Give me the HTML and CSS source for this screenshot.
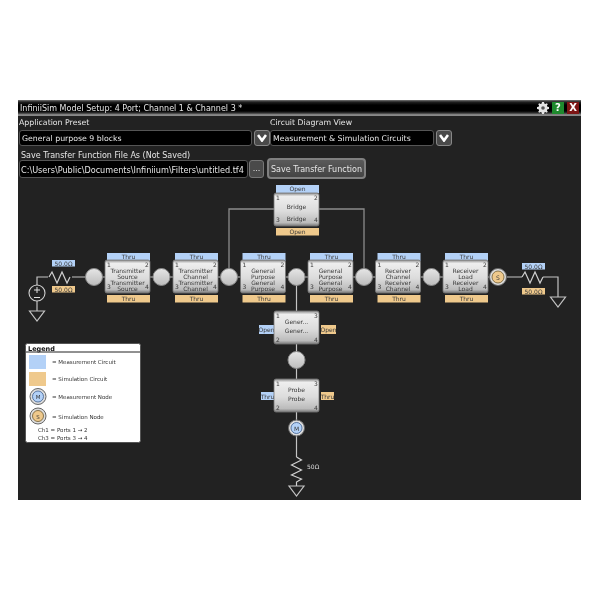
FILE: index.html
```html
<!DOCTYPE html>
<html>

<head>
    <title>InfiniiSim Model Setup</title>
    <link rel="stylesheet" href="styles.css">
</head>

<body>
    <div class="window">
        <div class="titlebar">
            <span class="title">InfiniiSim Model Setup: 4 Port; Channel 1 &amp; Channel 3 *</span>
            <svg class="gear" viewBox="0 0 12 12">
                <path fill="#e4e4e4" d="M5 0h2l.3 1.600 1.100.5L9.800 1.200l1 1-.9 1.400.5 1.100L12 5v2l-1.600.3-.5 1.100.9 1.400-1 1-1.400-.9-1.100.5L7 12H5l-.3-1.600-1.100-.5-1.400.9-1-1 .9-1.400-.5-1.100L0 7V5l1.600-.3.500-1.100-.9-1.400 1-1 1.400.9 1.100-.5z"/>
                <circle cx="6" cy="6" r="1.800" fill="#555"/>
            </svg>
            <span class="winbtn help">?</span>
            <span class="winbtn close">X</span>
        </div>

        <div class="presets">
            <div class="field preset-app">
                <label>Application Preset</label>
                <div class="combo">
                    <span class="combo-value">General purpose 9 blocks</span>
                    <span class="combo-btn"><svg viewBox="0 0 10 8"><path d="M1 1 5 6.500 9 1" fill="none" stroke="#fff" stroke-width="2.600"/></svg></span>
                </div>
            </div>
            <div class="field preset-view">
                <label>Circuit Diagram View</label>
                <div class="combo">
                    <span class="combo-value">Measurement &amp; Simulation Circuits</span>
                    <span class="combo-btn"><svg viewBox="0 0 10 8"><path d="M1 1 5 6.500 9 1" fill="none" stroke="#fff" stroke-width="2.600"/></svg></span>
                </div>
            </div>
        </div>

        <div class="save">
            <label class="save-label">Save Transfer Function File As (Not Saved)</label>
            <div class="save-row">
                <span class="path">C:\Users\Public\Documents\Infiniium\Filters\untitled.tf4</span>
                <span class="browse">...</span>
                <span class="save-btn">Save Transfer Function</span>
            </div>
        </div>

        <!-- coordinates in the viewBox are the same as in the screenshot -->
        <svg class="diagram" viewBox="18 183 563 317">
            <defs>
                <linearGradient id="blockFill" x1="0" y1="0" x2="0" y2="1">
                    <stop offset="0" stop-color="#8a8a8a"/>
                    <stop offset="0.1" stop-color="#eee"/>
                    <stop offset="0.55" stop-color="#dcdcdc"/>
                    <stop offset="0.9" stop-color="#bbb"/>
                    <stop offset="1" stop-color="#777"/>
                </linearGradient>
                <linearGradient id="nodeFill" x1="0" y1="0" x2="0" y2="1">
                    <stop offset="0" stop-color="#e6e6e6"/>
                    <stop offset="1" stop-color="#bcbcbc"/>
                </linearGradient>
                <g id="block">
                    <rect class="block-box" width="45" height="33" rx="2"/>
                </g>
                <g id="thruPair">
                    <rect class="meas" x="2" y="-7" width="43" height="8"/>
                    <rect class="sim" x="2" y="35" width="43" height="7.500"/>
                    <text class="small mid" x="23.500" y="-0.800">Thru</text>
                    <text class="small mid" x="23.500" y="41">Thru</text>
                </g>
                <g id="ports">
                    <text class="small" x="2" y="7">1</text>
                    <text class="small" x="40" y="7">2</text>
                    <text class="small" x="2" y="29">3</text>
                    <text class="small" x="40" y="29">4</text>
                </g>
                <path id="zigH" class="wire-zig" d="M0 0l3-5 5 11 5-11 5 11 3-6"/>
                <path id="ground" class="ground" d="M-7.500 0H7.500L0 10z"/>
            </defs>

            <!-- wires -->
            <path class="wire" d="M86 277H498"/>
            <path class="wire" d="M229 277V209H274M319 209H364V277"/>
            <path class="wire-light" d="M296.500 277V457"/>
            <path class="wire-light" d="M37 286V277H48M72 277H86M37 301V311M507 277H522M543 277H558V297"/>

            <use href="#zigH" x="49" y="277"/>
            <use href="#zigH" x="522" y="277"/>
            <path class="wire-zig" d="M296.500 457l5 3-10 5 10 5-10 5 10 4-5 3V486"/>
            <text class="small light" x="307" y="469">50Ω</text>

            <!-- source and grounds -->
            <circle class="source" cx="37" cy="293" r="8"/>
            <path class="source-mark" d="M34 290h6M37 287v6M34 297.500h6"/>
            <use href="#ground" x="37" y="311"/>
            <use href="#ground" x="558" y="297"/>
            <use href="#ground" x="296.500" y="486"/>

            <!-- terminations -->
            <rect class="meas" x="52" y="260" width="23" height="6.500"/>
            <text class="small mid" x="63.500" y="265.500">50.0Ω</text>
            <rect class="sim" x="52" y="286" width="23" height="6.500"/>
            <text class="small mid" x="63.500" y="291.500">50.0Ω</text>
            <rect class="meas" x="522" y="263" width="23" height="6.500"/>
            <text class="small mid" x="533.500" y="268.500">50.0Ω</text>
            <rect class="sim" x="522" y="288" width="23" height="6.500"/>
            <text class="small mid" x="533.500" y="293.500">50.0Ω</text>

            <!-- junctions -->
            <circle class="node" cx="94" cy="277" r="8.500"/>
            <circle class="node" cx="161.500" cy="277" r="8.500"/>
            <circle class="node" cx="229" cy="277" r="8.500"/>
            <circle class="node" cx="296.500" cy="277" r="8.500"/>
            <circle class="node" cx="364" cy="277" r="8.500"/>
            <circle class="node" cx="431.500" cy="277" r="8.500"/>
            <circle class="node" cx="296.500" cy="360" r="8.500"/>

            <!-- S and M nodes -->
            <circle class="ring" cx="498" cy="277" r="8.500"/>
            <circle class="sim-dot" cx="498" cy="277" r="6"/>
            <text class="small mid" x="498" y="279.500">S</text>
            <circle class="ring" cx="296.500" cy="428" r="8"/>
            <circle class="meas-dot" cx="296.500" cy="428" r="5.500"/>
            <text class="small mid" x="296.500" y="430.500">M</text>

            <!-- chain -->
            <g transform="translate(105 260)">
                <use href="#thruPair"/><use href="#block"/><use href="#ports"/>
                <text class="small mid" x="22.500" y="13">Transmitter</text>
                <text class="small mid" x="22.500" y="19">Source</text>
                <text class="small mid" x="22.500" y="25">Transmitter</text>
                <text class="small mid" x="22.500" y="31">Source</text>
            </g>
            <g transform="translate(173 260)">
                <use href="#thruPair"/><use href="#block"/><use href="#ports"/>
                <text class="small mid" x="22.500" y="13">Transmitter</text>
                <text class="small mid" x="22.500" y="19">Channel</text>
                <text class="small mid" x="22.500" y="25">Transmitter</text>
                <text class="small mid" x="22.500" y="31">Channel</text>
            </g>
            <g transform="translate(240.500 260)">
                <use href="#thruPair"/><use href="#block"/><use href="#ports"/>
                <text class="small mid" x="22.500" y="13">General</text>
                <text class="small mid" x="22.500" y="19">Purpose</text>
                <text class="small mid" x="22.500" y="25">General</text>
                <text class="small mid" x="22.500" y="31">Purpose</text>
            </g>
            <g transform="translate(308 260)">
                <use href="#thruPair"/><use href="#block"/><use href="#ports"/>
                <text class="small mid" x="22.500" y="13">General</text>
                <text class="small mid" x="22.500" y="19">Purpose</text>
                <text class="small mid" x="22.500" y="25">General</text>
                <text class="small mid" x="22.500" y="31">Purpose</text>
            </g>
            <g transform="translate(375.500 260)">
                <use href="#thruPair"/><use href="#block"/><use href="#ports"/>
                <text class="small mid" x="22.500" y="13">Receiver</text>
                <text class="small mid" x="22.500" y="19">Channel</text>
                <text class="small mid" x="22.500" y="25">Receiver</text>
                <text class="small mid" x="22.500" y="31">Channel</text>
            </g>
            <g transform="translate(443 260)">
                <use href="#thruPair"/><use href="#block"/><use href="#ports"/>
                <text class="small mid" x="22.500" y="13">Receiver</text>
                <text class="small mid" x="22.500" y="19">Load</text>
                <text class="small mid" x="22.500" y="25">Receiver</text>
                <text class="small mid" x="22.500" y="31">Load</text>
            </g>

            <!-- bridge -->
            <g transform="translate(274 193)">
                <rect class="meas" x="2" y="-8" width="43" height="8"/>
                <rect class="sim" x="2" y="35" width="43" height="7.500"/>
                <text class="small mid" x="23.500" y="-1.800">Open</text>
                <text class="small mid" x="23.500" y="41">Open</text>
                <use href="#block"/><use href="#ports"/>
                <text class="small mid" x="22.500" y="16">Bridge</text>
                <text class="small mid" x="22.500" y="28">Bridge</text>
            </g>

            <!-- branch down -->
            <g transform="translate(274 311)">
                <rect class="meas" x="-15" y="14" width="15" height="9"/>
                <rect class="sim" x="47" y="14" width="15" height="9"/>
                <text class="small mid" x="-7.500" y="21">Open</text>
                <text class="small mid" x="54.500" y="21">Open</text>
                <use href="#block"/>
                <text class="small" x="2" y="7">1</text>
                <text class="small" x="40" y="7">3</text>
                <text class="small" x="2" y="31">2</text>
                <text class="small" x="40" y="31">4</text>
                <text class="small mid" x="22.500" y="13">Gener...</text>
                <text class="small mid" x="22.500" y="22">Gener...</text>
            </g>
            <g transform="translate(274 379)">
                <rect class="meas" x="-13" y="13" width="13" height="8"/>
                <rect class="sim" x="47" y="13" width="13" height="8"/>
                <text class="small mid" x="-6.500" y="19.500">Thru</text>
                <text class="small mid" x="53.500" y="19.500">Thru</text>
                <use href="#block"/>
                <text class="small" x="2" y="7">1</text>
                <text class="small" x="40" y="7">3</text>
                <text class="small" x="2" y="31">2</text>
                <text class="small" x="40" y="31">4</text>
                <text class="small mid" x="22.500" y="13">Probe</text>
                <text class="small mid" x="22.500" y="22">Probe</text>
            </g>

            <!-- legend -->
            <rect class="legend-box" x="25.500" y="343.500" width="115" height="99" rx="2"/>
            <text class="legend-title" x="28" y="351">Legend</text>
            <path class="legend-rule" d="M26 352H140"/>
            <rect class="meas" x="29" y="355" width="17" height="14"/>
            <text class="tiny" x="52" y="364">= Measurement Circuit</text>
            <rect class="sim" x="29" y="372" width="17" height="14"/>
            <text class="tiny" x="52" y="381">= Simulation Circuit</text>
            <circle class="ring" cx="38" cy="396.500" r="8"/>
            <circle class="meas-dot" cx="38" cy="396.500" r="5.500"/>
            <text class="tiny mid" x="38" y="399">M</text>
            <text class="tiny" x="52" y="399">= Measurement Node</text>
            <circle class="ring" cx="38" cy="416" r="8"/>
            <circle class="sim-dot" cx="38" cy="416" r="5.500"/>
            <text class="tiny mid" x="38" y="418.500">S</text>
            <text class="tiny" x="52" y="418.500">= Simulation Node</text>
            <text class="tiny" x="38" y="432">Ch1  = Ports 1 → 2</text>
            <text class="tiny" x="38" y="440">Ch3  = Ports 3 → 4</text>
        </svg>
    </div>
</body>

</html>
```

FILE: styles.css
```css
body {
    margin: 0;
    padding: 100px 19px 0 18px;
    background-color: #fff;
    font-family: "DejaVu Sans", sans-serif;
}

.window {
    height: 400px;
    display: flex;
    flex-direction: column;
    background-color: #222;
    color: #e6e6e6;
    font-size: 8px;
    filter: blur(0.35px);
}

.titlebar {
    height: 16px;
    box-sizing: border-box;
    display: flex;
    align-items: center;
    gap: 2px;
    padding: 0 2px 0 2px;
    background: linear-gradient(#777 0, #222 2px, #000 5px, #000 11px, #333 13px, #999 15px, #777 16px);
}

.title {
    flex: 1;
}

.gear {
    width: 12px;
    height: 12px;
}

.winbtn {
    width: 12px;
    height: 12px;
    margin-left: 1px;
    font-size: 10px;
    font-weight: bold;
    line-height: 12px;
    text-align: center;
    color: #fff;
}

.help {
    background-color: #1f8a2e;
}

.close {
    background-color: #7c1414;
}

.presets {
    display: flex;
    padding: 2px 0 0 1px;
    font-size: 7.800px;
}

.preset-app {
    width: 251px;
}

.preset-view {
    width: 182px;
}

.field label {
    display: block;
    height: 12px;
    line-height: 10px;
}

.combo {
    display: flex;
    gap: 2px;
}

.combo-value {
    flex: 1;
    height: 16px;
    box-sizing: border-box;
    padding-left: 2px;
    line-height: 15px;
    background-color: #000;
    border: 1px solid #555;
    border-radius: 3px;
}

.combo-btn {
    width: 16px;
    height: 16px;
    box-sizing: border-box;
    display: flex;
    align-items: center;
    justify-content: center;
    background-color: #4a4a4a;
    border: 1px solid #888;
    border-radius: 3px;
}

.combo-btn svg {
    width: 10px;
    height: 8px;
}

/* label box is short on purpose, the big button starts right under its text */
.save {
    padding: 3px 0 4px 1px;
}

.save-label {
    display: block;
    height: 9px;
    line-height: 14px;
    padding-left: 2px;
}

.save-row {
    display: flex;
    align-items: center;
}

.path {
    width: 229px;
    height: 18px;
    box-sizing: border-box;
    padding-left: 1px;
    font-size: 8.150px;
    line-height: 18px;
    background-color: #000;
    border: 1px solid #555;
    border-radius: 3px;
    white-space: nowrap;
}

.browse {
    width: 15px;
    height: 18px;
    margin-left: 1px;
    box-sizing: border-box;
    line-height: 15px;
    text-align: center;
    background-color: #4a4a4a;
    border: 1px solid #777;
    border-radius: 3px;
}

.save-btn {
    width: 99px;
    height: 21px;
    margin-left: 3px;
    box-sizing: border-box;
    line-height: 19px;
    text-align: center;
    background: linear-gradient(#5a5a5a, #444);
    border: 2px solid #808080;
    border-radius: 4px;
}

.diagram {
    display: block;
    width: 563px;
    height: 317px;
}

.diagram text {
    font-family: "DejaVu Sans", sans-serif;
}

.wire {
    fill: none;
    stroke: #8c8c8c;
    stroke-width: 1.300;
}

.wire-light {
    fill: none;
    stroke: #c4c4c4;
    stroke-width: 1.200;
}

.wire-zig {
    fill: none;
    stroke: #d0d0d0;
    stroke-width: 1.200;
}

.ground {
    fill: #222;
    stroke: #c4c4c4;
    stroke-width: 1.200;
}

.source {
    fill: #222;
    stroke: #d0d0d0;
    stroke-width: 1.100;
}

.source-mark {
    fill: none;
    stroke: #e0e0e0;
    stroke-width: 1;
}

.block-box {
    fill: url(#blockFill);
    stroke: #777;
    stroke-width: 0.800;
}

.meas {
    fill: #b3d1f7;
}

.sim {
    fill: #efc98c;
}

.node {
    fill: url(#nodeFill);
    stroke: #888;
}

.ring {
    fill: #ddd;
    stroke: #666;
}

.meas-dot {
    fill: #b3d1f7;
    stroke: #3f5f8f;
    stroke-width: 0.800;
}

.sim-dot {
    fill: #efc98c;
    stroke: #6f5a30;
    stroke-width: 0.800;
}

.small {
    font-size: 6px;
    fill: #3a3a3a;
}

.tiny {
    font-size: 5.500px;
    fill: #333;
}

.mid {
    text-anchor: middle;
}

.light {
    fill: #ddd;
}

.legend-box {
    fill: #fff;
    stroke: #555;
}

.legend-title {
    font-size: 6.500px;
    font-weight: bold;
    fill: #111;
}

.legend-rule {
    stroke: #222;
    stroke-width: 1;
}
```
